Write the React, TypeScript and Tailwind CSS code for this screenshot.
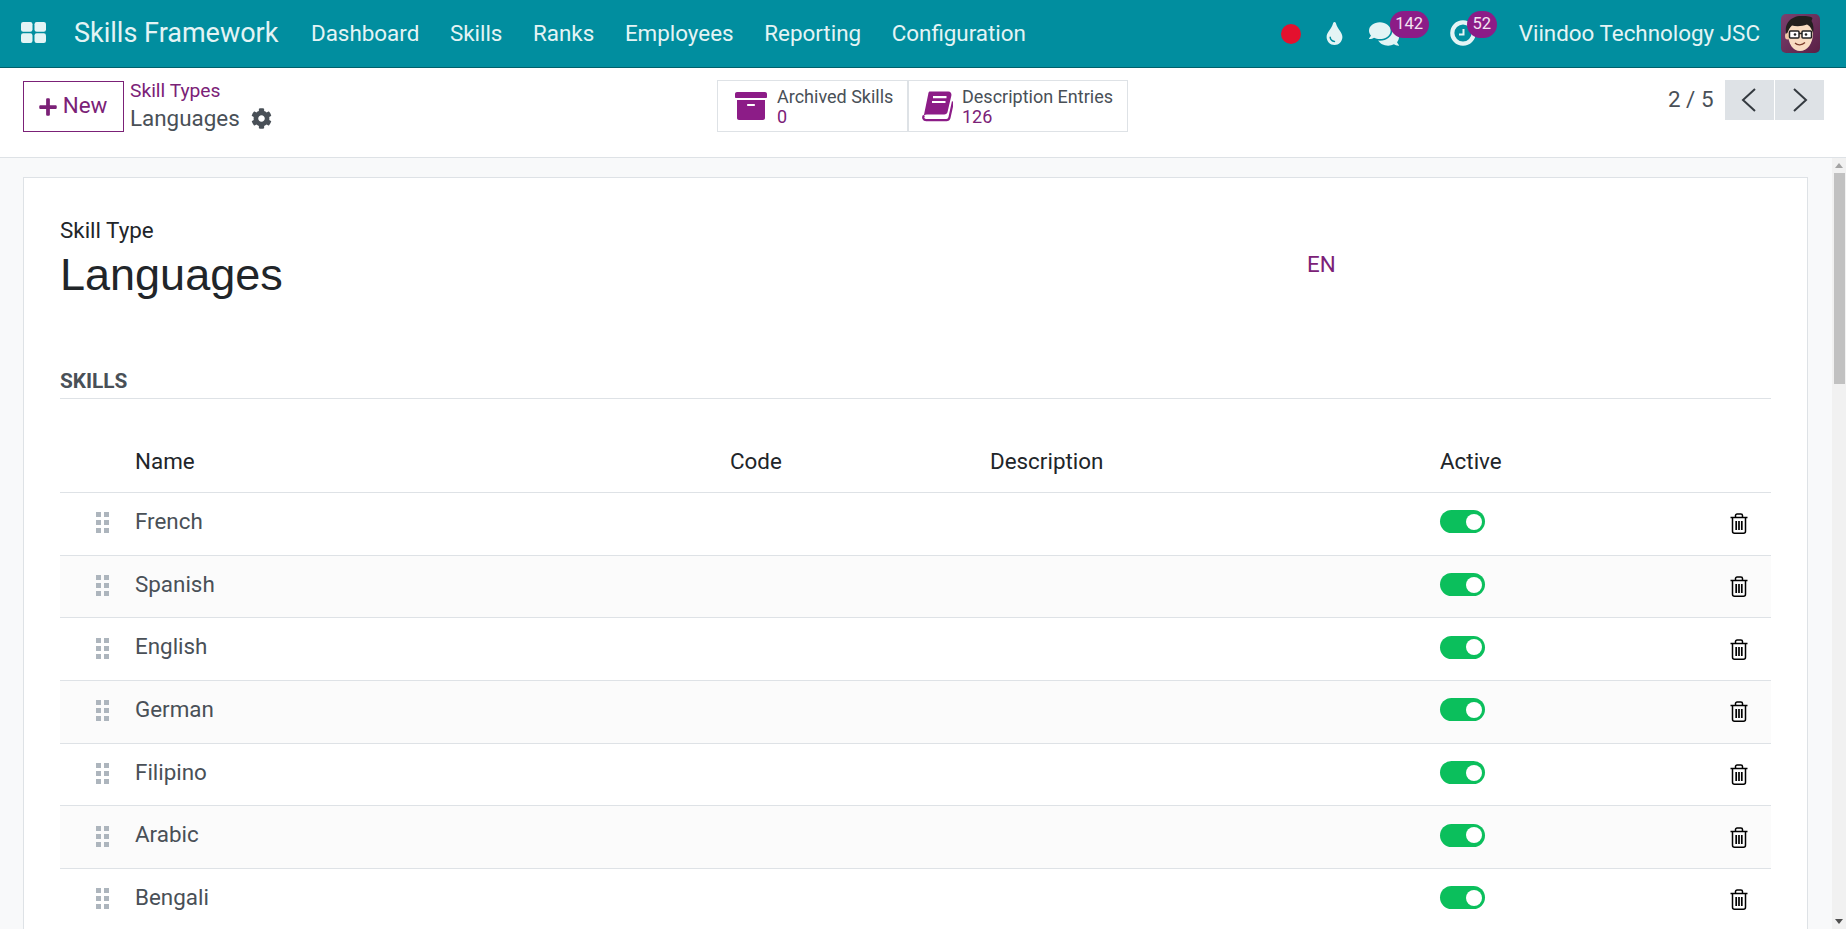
import React from "react";
import {
  FaArchive,
  FaCog,
  FaComments,
  FaPlus,
  FaTint,
} from "react-icons/fa";

const navItems = ["Dashboard", "Skills", "Ranks", "Employees", "Reporting", "Configuration"];
const skills = ["French", "Spanish", "English", "German", "Filipino", "Arabic", "Bengali"];

const AppsIcon = () => (
  <svg width="25" height="21" viewBox="0 0 25 21" fill="#e4f4f5">
    <rect x="0" y="0" width="11.5" height="9.7" rx="2.2" />
    <rect x="13.5" y="0" width="11.5" height="9.7" rx="2.2" />
    <rect x="0" y="11.3" width="11.5" height="9.7" rx="2.2" />
    <rect x="13.5" y="11.3" width="11.5" height="9.7" rx="2.2" />
  </svg>
);

const ClockIcon = () => (
  <svg width="26" height="26" viewBox="0 0 26 26" fill="none" stroke="#e4f4f5">
    <circle cx="13" cy="13" r="10.7" strokeWidth="4.2" />
    <path d="M13.5 9v5.5H9" strokeWidth="2" />
  </svg>
);

const BookIcon = () => (
  <svg width="32" height="31" viewBox="0 0 32 31" fill="#8c1c87">
    <path d="M8.5 0.5h18.7c2.3 0 3.7 1.7 3.2 4L26.6 20.7c-.4 1.8-1.6 2.8-3.4 2.8H6c-1.3 0-2.4.4-3.2 1.2L7.2 3.2C7.5 1.6 7.9.5 8.5.5z" />
    <path
      d="M3 24.5c-1.6 2-.6 4.6 2.2 4.6h20.3c1.5 0 2.5-.8 2.9-2.2L32 10.5"
      fill="none"
      stroke="#8c1c87"
      strokeWidth="2.2"
    />
    <path d="M12 6.2h13.5M11 11h13.5" stroke="#fff" strokeWidth="2.2" />
  </svg>
);

const TrashIcon = () => (
  <svg width="18" height="21" viewBox="0 0 18 21" fill="none" stroke="#000" strokeWidth="1.5">
    <path d="M0.5 4.5h17" />
    <path d="M5.5 4.5V2.6c0-1 .7-1.6 1.6-1.6h3.8c.9 0 1.6.6 1.6 1.6v1.9" />
    <path d="M2.5 4.5v13.7c0 1.2.8 2 2 2h9c1.2 0 2-.8 2-2V4.5" />
    <path d="M6.2 8v9M9 8v9M11.8 8v9" strokeWidth="1.7" />
  </svg>
);

const Avatar = () => (
  <svg width="39" height="39" viewBox="0 0 39 39" className="rounded-[5px]">
    <defs>
      <linearGradient id="av" x1="0" y1="0" x2="1" y2="1">
        <stop offset="0" stopColor="#7a4170" />
        <stop offset="1" stopColor="#5a1f45" />
      </linearGradient>
    </defs>
    <rect width="39" height="39" fill="url(#av)" />
    <path d="M7 19c0-8 6-12 13-12s12 4 12 12c0 11-6 18-13 18S7 30 7 19z" fill="#f8dcc2" />
    <ellipse cx="6.5" cy="22" rx="2.5" ry="3.5" fill="#f0c6a6" />
    <path d="M5.5 20C2.5 10 10 2 20 2c4 0 9 0 11.5 2l-1 3c2 3 2.5 8 1.5 12-1-3-2.5-7-6-8.500-5 2-11 2-15 1-2.500 2-3.500 5-5.500 8.500z" fill="#23201f" />
    <rect x="8.500" y="17" width="9.500" height="7" rx="1" fill="#fff" stroke="#222" strokeWidth="1.500" />
    <rect x="21" y="17" width="9.500" height="7" rx="1" fill="#fff" stroke="#222" strokeWidth="1.500" />
    <path d="M18 19.500H21" stroke="#222" strokeWidth="1.300" />
    <circle cx="14" cy="20.500" r="1.300" fill="#222" />
    <circle cx="25" cy="20.500" r="1.300" fill="#222" />
    <path d="M14 29c2.500 2.500 7 2.500 10-.5" fill="none" stroke="#7a3b2a" strokeWidth="1.300" />
  </svg>
);

const Badge = ({ children, className }: { children: React.ReactNode; className: string }) => (
  <span
    className={`absolute flex h-[27px] items-center justify-center rounded-full bg-[#8c1c87] text-[16.5px] text-[#f3e4f2] ${className}`}
  >
    {children}
  </span>
);

const SkillRow = ({ name, striped }: { name: string; striped: boolean }) => (
  <div
    className={`grid h-[62.7px] grid-cols-[75px_595px_260px_450px_1fr] items-center border-b border-[#dee2e6] text-[22.4px] text-[#495057] ${
      striped ? "bg-[#fbfbfb]" : "bg-white"
    }`}
  >
    <div className="pb-[2px] pl-[36px]">
      <div className="grid w-[13px] grid-cols-2 gap-x-[3px] gap-y-[3px]">
        {[0, 1, 2, 3, 4, 5].map((i) => (
          <span key={i} className="h-[5px] w-[5px] bg-[#adb5bd]" />
        ))}
      </div>
    </div>
    <div className="pb-[4px]">{name}</div>
    <div />
    <div />
    <div className="flex items-center justify-between pr-[23px]">
      <span className="mb-[4px] flex h-[23px] w-[45px] items-center justify-end rounded-full bg-[#0bbf5c] pr-[3px]">
        <span className="h-[16px] w-[16px] rounded-full bg-white" />
      </span>
      <span className="flex">
        <TrashIcon />
      </span>
    </div>
  </div>
);

export default function App() {
  return (
    <div className="flex h-[929px] w-[1846px] flex-col overflow-hidden bg-[#f8f9fa] font-['Roboto',sans-serif]">
      {/* Navbar */}
      <header className="flex h-[68px] shrink-0 items-center border-b border-[#01606b] bg-[#018e9f] text-[#e4f4f5]">
        <div className="ml-[21px] flex w-[53px] shrink-0 pb-[3px]">
          <AppsIcon />
        </div>
        <div className="w-[237px] shrink-0 text-[27px]">Skills Framework</div>
        <nav className="flex gap-[30.6px] text-[22.4px]">
          {navItems.map((item) => (
            <span key={item}>{item}</span>
          ))}
        </nav>
        <div className="ml-auto flex items-center">
          <span className="h-[20px] w-[20px] rounded-full bg-[#e4112e]" />
          <span className="ml-[22px] text-[23px]">
            <FaTint />
          </span>
          <span className="relative ml-[23px] text-[30px]">
            <FaComments />
            <Badge className="-top-[8px] left-[21px] w-[39px]">142</Badge>
          </span>
          <span className="relative mb-[2px] ml-[51px]">
            <ClockIcon />
            <Badge className="-top-[9px] left-[17px] w-[30px]">52</Badge>
          </span>
          <span className="ml-[43px] text-[22.4px]">Viindoo Technology JSC</span>
          <span className="ml-[21px] mr-[26px] flex">
            <Avatar />
          </span>
        </div>
      </header>

      {/* Control panel */}
      <div className="flex h-[90px] shrink-0 items-start border-b border-[#dee2e6] bg-white">
        <button className="ml-[23px] mt-[13px] flex h-[51px] w-[101px] items-center justify-center gap-[5px] border border-[#7b2177] pb-[2px] pr-[2px] text-[22.4px] text-[#7b2177]">
          <FaPlus className="mt-[2px] text-[20px]" />
          New
        </button>
        <div className="ml-[6px] mt-[11px] w-[587px]">
          <div className="text-[19.25px] leading-[24px] text-[#7b2177]">Skill Types</div>
          <div className="mt-[2px] flex items-center gap-[11px] text-[22.4px] leading-[27px] text-[#495057]">
            Languages
            <FaCog className="text-[21px]" />
          </div>
        </div>
        <div className="mt-[12px] flex h-[52px] w-[411px] border border-[#dee2e6]">
          <div className="flex w-[191px] items-center border-r-2 border-[#dee2e6] pl-[17px]">
            <FaArchive className="text-[32px] text-[#8c1c87]" />
            <div className="ml-[10px] pt-[1px] text-[18px] leading-[20px]">
              <div className="text-[#495057]">Archived Skills</div>
              <div className="text-[#7b2177]">0</div>
            </div>
          </div>
          <div className="flex flex-1 items-center pl-[12px]">
            <BookIcon />
            <div className="ml-[9px] pt-[1px] text-[18px] leading-[20px]">
              <div className="text-[#495057]">Description Entries</div>
              <div className="text-[#7b2177]">126</div>
            </div>
          </div>
        </div>
        <div className="ml-auto mr-[22px] mt-[12px] flex items-center">
          <span className="mr-[11px] text-[22.4px] text-[#495057]">2 / 5</span>
          <span className="flex h-[40px] w-[49.5px] items-center justify-center bg-[#dee2e6]">
            <svg width="16" height="24" viewBox="0 0 16 24" fill="none" stroke="#343a40" strokeWidth="2">
              <path d="M14 1L2 12l12 11" />
            </svg>
          </span>
          <span className="ml-[1px] flex h-[40px] w-[49px] items-center justify-center bg-[#dee2e6]">
            <svg width="16" height="24" viewBox="0 0 16 24" fill="none" stroke="#343a40" strokeWidth="2">
              <path d="M2 1l12 11L2 23" />
            </svg>
          </span>
        </div>
      </div>

      {/* Form sheet */}
      <div className="flex min-h-0 flex-1 overflow-hidden">
        <main className="min-w-0 flex-1 overflow-hidden pl-[23px] pr-[24px] pt-[19px]">
          <div className="h-[800px] border border-[#dee2e6] bg-white px-[36px] pt-[39px]">
            <div className="relative">
              <div className="text-[22.4px] leading-[26px] text-[#212529]">Skill Type</div>
              <h1 className="mt-[6px] font-['Liberation_Sans',sans-serif] text-[45px] leading-[52px] text-[#212529]">
                Languages
              </h1>
              <span className="absolute left-[1247px] top-[31px] text-[22.4px] text-[#7b2177]">EN</span>
            </div>
            <div className="mt-[67px] border-b border-[#dee2e6] pb-[4px] text-[20.8px] font-bold leading-[26px] text-[#495057]">
              SKILLS
            </div>
            <div className="mt-[33px] grid h-[61px] grid-cols-[75px_595px_260px_450px_1fr] items-center border-b border-[#dee2e6] text-[22.4px] text-[#212529]">
              <div />
              <div>Name</div>
              <div>Code</div>
              <div>Description</div>
              <div>Active</div>
            </div>
            {skills.map((name, i) => (
              <SkillRow key={name} name={name} striped={i % 2 === 1} />
            ))}
          </div>
        </main>
        {/* Scrollbar */}
        <div className="flex w-[14px] shrink-0 flex-col items-center bg-[#f1f1f1] pt-[5px]">
          <svg width="8" height="5" viewBox="0 0 8 5" fill="#a3a3a3">
            <path d="M4 0l4 5H0z" />
          </svg>
          <div className="ml-[1px] mt-[5px] h-[211px] w-[11px] bg-[#c1c1c1]" />
          <svg width="8" height="5" viewBox="0 0 8 5" fill="#505050" className="mt-auto mb-[5px]">
            <path d="M0 0h8L4 5z" />
          </svg>
        </div>
      </div>
    </div>
  );
}
